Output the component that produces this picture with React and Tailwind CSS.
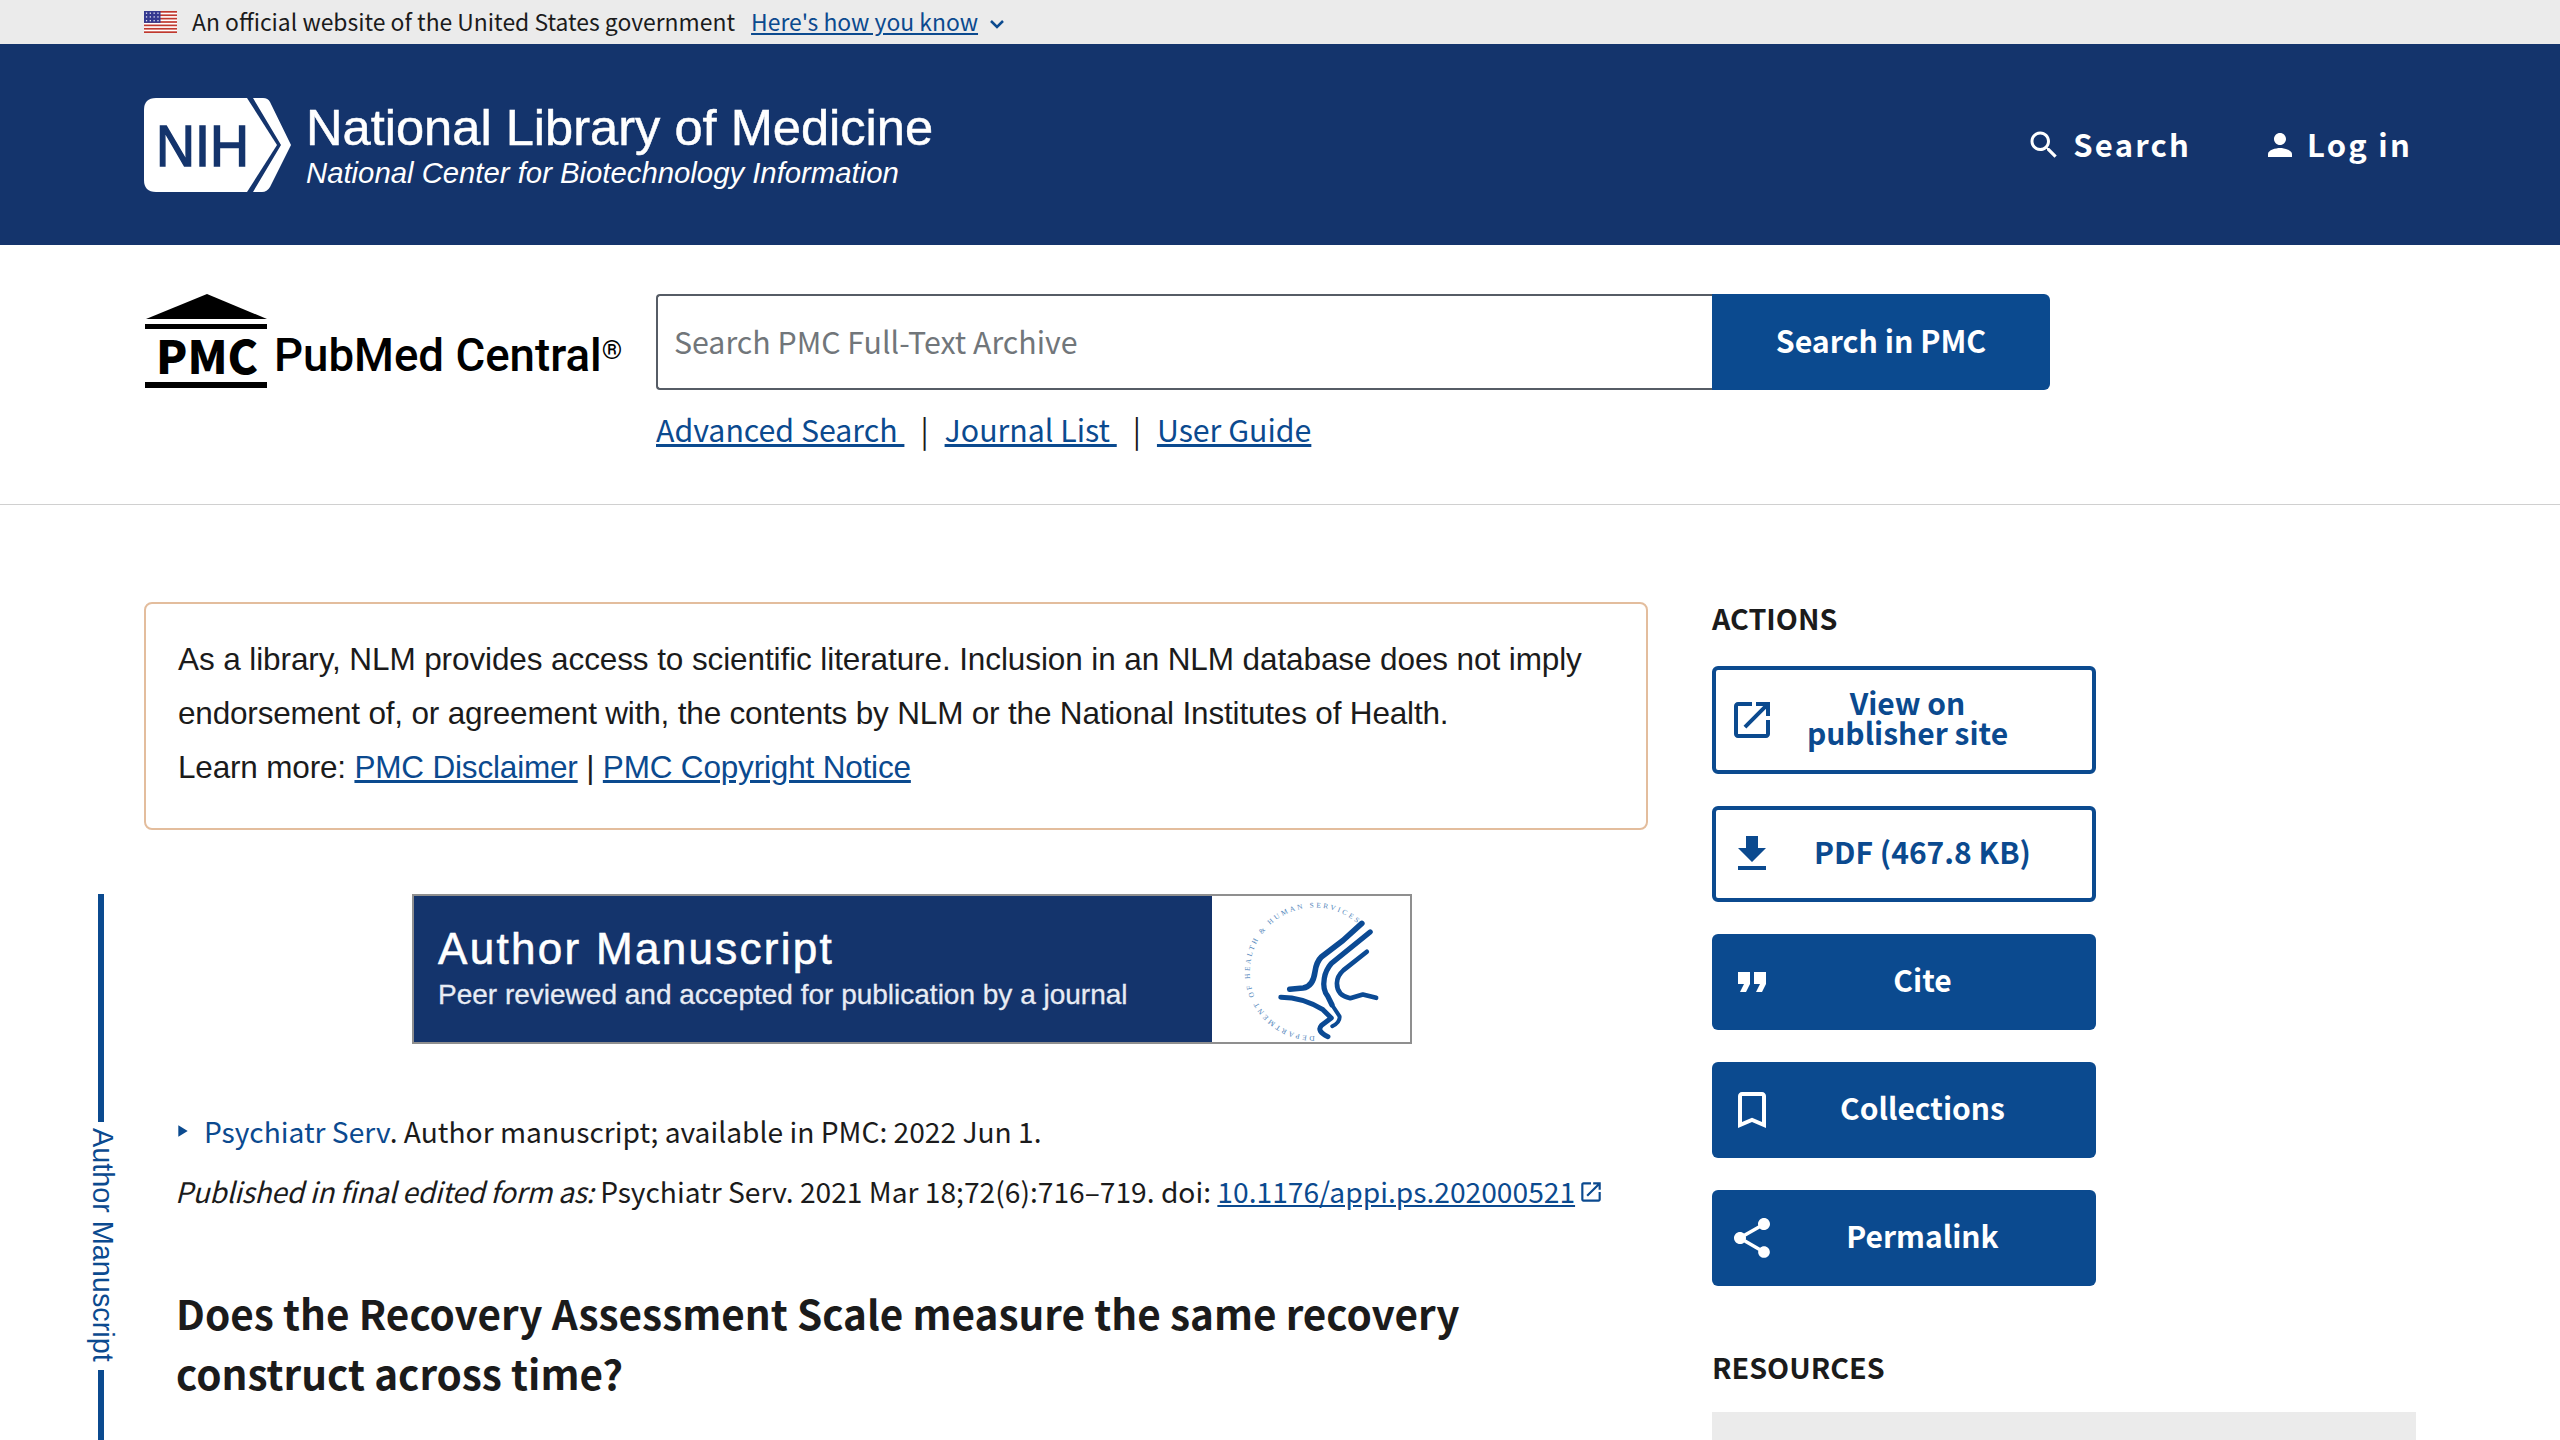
const SS = "font-['Noto_Sans_CJK_SC','Source_Sans_Pro',sans-serif]";

function Flag() {
  const stripes = [0, 2, 4, 6, 8, 10, 12];
  return (
    <svg width="33" height="22" viewBox="0 0 26 13" preserveAspectRatio="none" className="shrink-0">
      <rect width="26" height="13" fill="#fff" />
      {stripes.map((y) => <rect key={y} y={y} width="26" height="1" fill="#c0392f" />)}
      <rect width="13" height="7" fill="#34398f" />
      {[1, 3, 5, 7].map((x) => [1.3, 3.5, 5.7].map((y) => <rect key={x + "-" + y} x={x * 1.5} y={y - 0.4} width="1" height="0.8" fill="#e6e7f5" />))}
    </svg>
  );
}

function NihLogo() {
  return (
    <svg width="150" height="94" viewBox="144 97 150 94" className="shrink-0">
      <path d="M156 97H247L277 144L247 191H156Q144 191 144 179V109Q144 97 156 97Z" fill="#fff" />
      <path d="M253 97H263Q268 97 270 101L291 144L270 186Q267 191 262 191H253L281 144Z" fill="#fff" />
      <text x="156" y="165" textLength="93" lengthAdjust="spacingAndGlyphs" fontFamily="Liberation Sans" fontSize="58" fill="#14346c" stroke="#14346c" strokeWidth="1.5">NIH</text>
    </svg>
  );
}

function PmcLogo() {
  return (
    <svg width="126" height="96" viewBox="145 293 126 96" className="shrink-0">
      <path d="M208 294L268 319H147Z" fill="#000" />
      <rect x="146" y="324" width="122" height="5" fill="#000" />
      <text x="157" y="374" textLength="102" lengthAdjust="spacingAndGlyphs" fontFamily="Noto Sans CJK SC" fontWeight="900" fontSize="46" fill="#000">PMC</text>
      <rect x="146" y="382" width="122" height="6" fill="#000" />
    </svg>
  );
}

function Seal() {
  return (
    <svg viewBox="36 15 596 443" preserveAspectRatio="none" className="w-full h-full overflow-visible">
      <defs>
        <path id="seal-ring" d="M345 440A195 195 0 1 1 475 100" />
      </defs>
      <text fontFamily="Liberation Serif" fontSize="22" fill="#4f84ba">
        <textPath href="#seal-ring" textLength="830">DEPARTMENT OF HEALTH &amp; HUMAN SERVICES USA</textPath>
      </text>
      <g fill="none" stroke="#0b4a94" strokeLinecap="round" strokeLinejoin="round">
        <path d="M487 98L430 150L365 200Q350 215 346 245Q340 290 310 294L270 298" strokeWidth="17" />
        <path d="M512 124L395 220Q378 240 374 265Q368 300 385 320L397 345" strokeWidth="16" />
        <path d="M502 184L432 240Q412 258 412 280Q412 318 452 325L490 314L530 324" strokeWidth="14" />
        <path d="M243 322Q310 322 370 360L395 385L365 408Q350 425 385 442" strokeWidth="15" />
        <path d="M397 345L420 380Q422 398 398 410" strokeWidth="12" />
      </g>
    </svg>
  );
}

function I({ d, size = 48, className = "" }) {
  return (
    <svg width={size} height={size} viewBox="0 0 24 24" fill="currentColor" className={"shrink-0 " + className}>
      <path d={d} />
    </svg>
  );
}

const paths = {
  search: "M15.5 14h-.79l-.28-.27C15.41 12.59 16 11.11 16 9.5 16 5.91 13.09 3 9.5 3S3 5.91 3 9.5 5.91 16 9.5 16c1.61 0 3.09-.59 4.23-1.57l.27.28v.79l5 4.99L20.49 19l-4.99-5zm-6 0C7.01 14 5 11.99 5 9.5S7.01 5 9.5 5 14 7.01 14 9.5 11.99 14 9.5 14z",
  person: "M12 12c2.21 0 4-1.79 4-4s-1.79-4-4-4-4 1.79-4 4 1.79 4 4 4zm0 2c-2.67 0-8 1.34-8 4v2h16v-2c0-2.66-5.33-4-8-4z",
  download: "M19 9h-4V3H9v6H5l7 7 7-7zM5 18v2h14v-2H5z",
  quote: "M6 17h3l2-4V7H5v6h3zm8 0h3l2-4V7h-6v6h3z",
  bookmark: "M17 3H7c-1.1 0-1.99.9-1.99 2L5 21l7-3 7 3V5c0-1.1-.9-2-2-2zm0 15l-5-2.18L7 18V5h10v13z",
  share: "M18 16.08c-.76 0-1.44.3-1.96.77L8.91 12.7c.05-.23.09-.46.09-.7s-.04-.47-.09-.7l7.05-4.11c.54.5 1.25.81 2.04.81 1.66 0 3-1.34 3-3s-1.34-3-3-3-3 1.34-3 3c0 .24.04.47.09.7L8.04 9.81C7.5 9.31 6.79 9 6 9c-1.66 0-3 1.34-3 3s1.34 3 3 3c.79 0 1.5-.31 2.04-.81l7.12 4.16c-.05.21-.08.43-.08.65 0 1.61 1.31 2.92 2.92 2.92 1.61 0 2.92-1.31 2.92-2.92s-1.31-2.92-2.92-2.92z",
  open: "M19 19H5V5h7V3H5c-1.11 0-2 .9-2 2v14c0 1.1.89 2 2 2h14c1.1 0 2-.9 2-2v-7h-2v7zM14 3v2h3.59l-9.83 9.83 1.41 1.41L19 6.41V10h2V3h-7z",
};

function ActionButton({ icon, children, outline, height, labelPad = "pr-[27px]" }) {
  return (
    <a className={"flex items-center w-[384px] rounded-[6px] " + height + " " + (outline ? "border-[4px] border-[#0b4a8f] bg-white text-[#0b4a8f] pl-[13px]" : "bg-[#0b4a8f] text-white pl-[17px]")}>
      <I d={paths[icon]} className="-ml-[1px]" />
      <span className={"flex-1 text-center text-[30px] leading-[30px] font-bold pb-[6px] " + labelPad}>{children}</span>
    </a>
  );
}

export default function App() {
  return (
    <div className={"relative h-screen overflow-hidden bg-white text-[#1b1b1b] " + SS}>
      <div className="h-[44px] bg-[#ebebeb] flex items-center pl-[144px] text-[22.9px]">
        <Flag />
        <span className="ml-[15px] pb-[2px]">An official website of the United States government</span>
        <a className="ml-[16px] pb-[2px] text-[#0b4a8f] underline">Here's how you know</a>
        <svg width="16" height="10" viewBox="0 0 16 10" className="ml-[11px] mt-[3px]" fill="none" stroke="#0b4a8f" strokeWidth="2.5"><path d="M2 2l6 6 6-6" /></svg>
      </div>

      <header className="h-[201px] bg-[#14346c] flex items-center justify-between pl-[144px] pr-[148px] text-white">
        <div className="flex items-center">
          <NihLogo />
          <div className="ml-[12px] font-['Liberation_Sans',sans-serif]">
            <div className="text-[50.6px] leading-[56px] [-webkit-text-stroke:0.5px_white]">National Library of Medicine</div>
            <div className="text-[29.3px] leading-[34px] italic">National Center for Biotechnology Information</div>
          </div>
        </div>
        <div className="flex items-center gap-[71px] text-[31px] font-bold tracking-[2.2px]">
          <div className="flex items-center gap-[11px]"><I d={paths.search} size={36} />Search</div>
          <div className="flex items-center gap-[9px]"><I d={paths.person} size={36} />Log in</div>
        </div>
      </header>

      <section className="h-[260px] border-b border-[#d0d0d0] pl-[144px] flex items-start">
        <div className="flex items-center mt-[48px] w-[480px]">
          <PmcLogo />
          <span className="ml-[4px] mt-[30px] text-[45.6px] leading-none text-black font-medium font-['Roboto',sans-serif] whitespace-nowrap">PubMed Central<sup className="text-[26px] relative -top-[12px] align-baseline font-normal">®</sup></span>
        </div>
        <div className="ml-[32px] mt-[49px]">
          <div className="flex">
            <div className="w-[1056px] h-[96px] border-2 border-[#565c65] border-r-0 rounded-l-[4px] flex items-center pl-[16px] text-[30.3px] text-[#71767a]">Search PMC Full-Text Archive</div>
            <button className="w-[338px] h-[96px] bg-[#0b4a8f] rounded-r-[6px] text-white text-[30.3px] font-bold pb-[3px]">Search in PMC</button>
          </div>
          <div className="mt-[15px] flex items-center text-[30.3px] leading-[48px] text-[#0b4a8f]">
            <a className="underline">Advanced Search&nbsp;</a>
            <span className="mx-[16px] text-[#1b1b1b]">|</span>
            <a className="underline">Journal List&nbsp;</a>
            <span className="mx-[16px] text-[#1b1b1b]">|</span>
            <a className="underline">User Guide</a>
          </div>
        </div>
      </section>

      <main className="flex pl-[144px] pt-[97px] gap-[64px]">
        <div className="w-[1504px] shrink-0">
          <div className="h-[228px] border-2 border-[#e3bd9d] rounded-[8px] px-[32px] pt-[28px] text-[31.5px] leading-[54px] tracking-[-0.18px] text-[#1b1b1b] font-['Liberation_Sans',sans-serif] whitespace-nowrap">
            <p className="tracking-[-0.1px]">As a library, NLM provides access to scientific literature. Inclusion in an NLM database does not imply</p>
            <p>endorsement of, or agreement with, the contents by NLM or the National Institutes of Health.</p>
            <p>Learn more: <a className="text-[#0b4a8f] underline">PMC Disclaimer</a> | <a className="text-[#0b4a8f] underline">PMC Copyright Notice</a></p>
          </div>

          <div className="relative ml-[268px] mt-[64px] w-[1000px] h-[150px] border-2 border-[#8f8f8f] flex bg-white font-['Liberation_Sans',sans-serif]">
            <div className="w-[798px] shrink-0 bg-[#14346c] text-white pl-[24px] pt-[27px]">
              <div className="text-[44px] leading-[52px] tracking-[2.3px] [-webkit-text-stroke:0.6px_white]">Author Manuscript</div>
              <div className="text-[28px] leading-[36px] mt-[2px] text-[#e8ecf4] [-webkit-text-stroke:0.3px_#e8ecf4]">Peer reviewed and accepted for publication by a journal</div>
            </div>
            <div className="flex-1"><Seal /></div>
          </div>

          <div className="ml-[32px] mt-[64px] text-[28.2px] leading-[46px] flex items-center">
            <svg width="14" height="14" viewBox="0 0 10 12" className="mr-[14px]"><path d="M1 1L9 6L1 11Z" fill="#0b4a8f" /></svg>
            <span><a className="text-[#0b4a8f]">Psychiatr Serv</a>. Author manuscript; available in PMC: 2022 Jun 1.</span>
          </div>
          <div className="ml-[31px] mt-[14px] text-[28.2px] leading-[46px] flex items-center whitespace-nowrap">
            <span><i className="tracking-[-0.33px]">Published in final edited form as:</i> Psychiatr Serv. 2021 Mar 18;72(6):716–719. doi: <a className="text-[#0b4a8f] underline">10.1176/appi.ps.202000521</a></span>
            <I d={paths.open} size={26} className="ml-[3px] mt-[2px] text-[#0b4a8f]" />
          </div>

          <h1 className="ml-[32px] mt-[69px] w-[1400px] text-[40.5px] leading-[60px] font-bold">Does the Recovery Assessment Scale measure the same recovery construct across time?</h1>
        </div>

        <aside className="w-[704px] shrink-0">
          <h2 className="text-[28.7px] leading-[32px] font-bold mb-[32px]">ACTIONS</h2>
          <div className="flex flex-col gap-[32px]">
            <ActionButton icon="open" outline height="h-[108px]" labelPad="pr-[53px]">View on<br />publisher site</ActionButton>
            <ActionButton icon="download" outline height="h-[96px]" labelPad="pr-[23px]">PDF (467.8 KB)</ActionButton>
            <ActionButton icon="quote" height="h-[96px]">Cite</ActionButton>
            <ActionButton icon="bookmark" height="h-[96px]">Collections</ActionButton>
            <ActionButton icon="share" height="h-[96px]">Permalink</ActionButton>
          </div>
          <h2 className="text-[28.7px] leading-[42px] font-bold mt-[60px] mb-[24px]">RESOURCES</h2>
          <div className="h-[60px] bg-[#ebebeb]" />
        </aside>
      </main>

      <div className="absolute left-[80px] top-[894px] bottom-0 w-[42px] flex flex-col items-center">
        <div className="w-[6px] h-[228px] bg-[#0b4a8f]" />
        <div className="[writing-mode:vertical-rl] text-[28.8px] leading-[42px] text-[#0b4a8f] font-['Liberation_Sans',sans-serif] mt-[6px] mb-[8px] ml-[4px] whitespace-nowrap">Author Manuscript</div>
        <div className="w-[6px] flex-1 bg-[#0b4a8f]" />
      </div>
    </div>
  );
}
